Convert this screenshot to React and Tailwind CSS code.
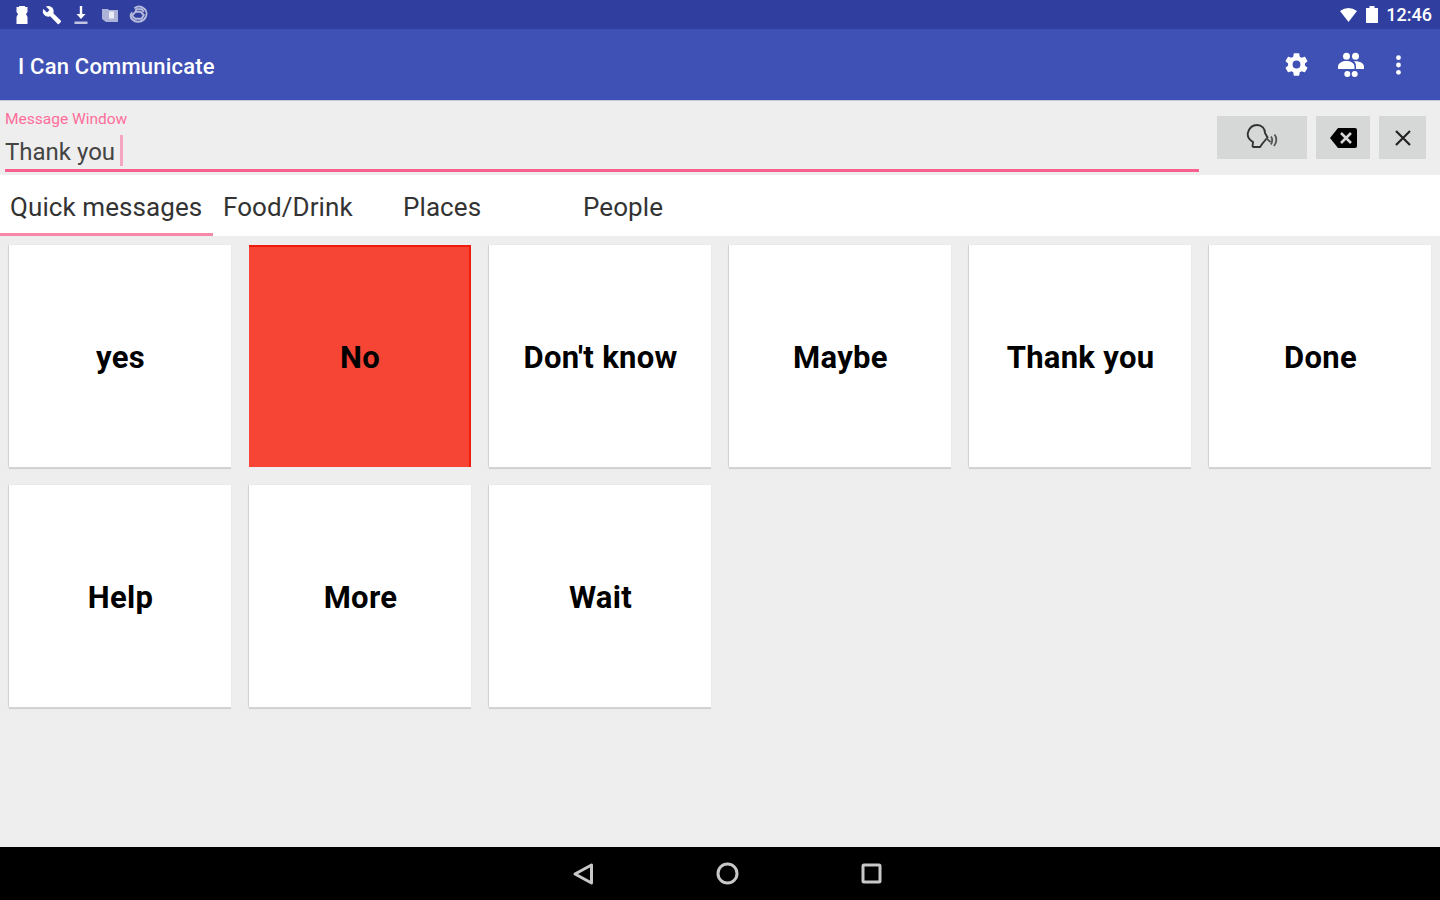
const messages = [
  { text: "yes" },
  { text: "No", danger: true },
  { text: "Don't know" },
  { text: "Maybe" },
  { text: "Thank you" },
  { text: "Done" },
  { text: "Help" },
  { text: "More" },
  { text: "Wait" },
];

const StatusBar = () => (
  <div className="flex h-[29px] items-center justify-between bg-[#303f9f] pr-2 pl-[13px] text-white">
    <div className="flex items-center gap-[10.500px]">
      <svg className="h-[18px] w-[18px]" viewBox="0 0 18 18" fill="currentColor">
        <path d="M6 0h6v1h2.500v5L13 8l1.500 3v7h-11v-7L5 8 3.500 6V1H6z" />
      </svg>
      <svg className="h-[20px] w-[20px]" viewBox="0 0 24 24" fill="currentColor">
        <path d="M22.700 19l-9.100-9.100c.9-2.300.4-5-1.500-6.900-2-2-5-2.400-7.400-1.300L9 6 6 9 1.600 4.700C.4 7.100.9 10.100 2.900 12.100c1.900 1.900 4.600 2.400 6.900 1.500l9.100 9.100c.4.4 1 .4 1.400 0l2.300-2.300c.5-.4.5-1.100.1-1.400z" />
      </svg>
      <svg className="h-[20px] w-[18px]" viewBox="0 0 18 20" fill="currentColor">
        <path d="M7.800 1h2.400v8h3.300L9 14 4.500 9h3.300z" />
        <path d="M2.500 16.500h13V19h-13z" opacity=".7" />
      </svg>
      <svg className="h-[18px] w-[18px]" viewBox="0 0 18 18" fill="currentColor">
        <path d="M1 3h6l1 1h9v12H5l-4-3z" opacity=".6" />
        <path d="M8 5.500h5v7H8z" opacity=".75" />
      </svg>
      <svg className="h-[19px] w-[19px]" viewBox="0 0 18 18" fill="none" stroke="currentColor" strokeWidth="1.800" opacity=".65">
        <path d="M5 3c3-2 7-2 10 1 2.500 3 2 7-1 10-3 2.500-8 2.500-10.500 0C1 12 1 9 3 7" />
        <path d="M2.500 10.500L6 6.500h5l3 3-2 3.500H6l-3-2.500M6 6.500l1-2.500h5l2 2.500" />
      </svg>
    </div>
    <div className="flex items-center">
      <svg className="h-[14px] w-[17px]" viewBox="0 0 17 14" fill="currentColor">
        <path d="M0 3Q8.500-3 17 3L8.500 14z" />
      </svg>
      <svg className="mr-2 ml-[9px] h-[17px] w-3" viewBox="0 0 12 17" fill="currentColor">
        <path d="M3.500 0h5v2H12v15H0V2h3.500z" />
      </svg>
      <span className="text-[18px] leading-none font-medium">12:46</span>
    </div>
  </div>
);

const AppBar = () => (
  <div className="flex h-[71px] items-center justify-between bg-[#3f51b5] pr-[38px] pl-[18px] text-white">
    <h1 className="pt-[3px] text-[22px] font-medium tracking-[0.2px]">I Can Communicate</h1>
    <div className="flex items-center">
      <svg className="h-[27px] w-[27px]" viewBox="0 0 24 24" fill="currentColor">
        <path d="M19.430 12.980c.04-.32.070-.64.070-.98s-.03-.66-.07-.98l2.110-1.650c.19-.15.240-.42.120-.64l-2-3.460c-.12-.22-.39-.3-.61-.22l-2.490 1c-.52-.4-1.080-.73-1.690-.98l-.38-2.650A.488.488 0 0 0 14 2h-4c-.25 0-.46.180-.49.420l-.38 2.650c-.61.250-1.170.590-1.690.980l-2.490-1c-.23-.09-.49 0-.61.220l-2 3.460c-.13.220-.07.490.120.640l2.110 1.650c-.04.320-.07.650-.07.980s.030.660.070.980l-2.110 1.650c-.19.150-.24.420-.12.640l2 3.460c.12.220.390.300.610.220l2.490-1c.52.400 1.080.730 1.690.980l.38 2.650c.03.240.240.420.490.420h4c.25 0 .46-.18.490-.42l.38-2.650c.61-.25 1.170-.59 1.690-.98l2.490 1c.23.090.490 0 .61-.22l2-3.460c.12-.22.070-.49-.12-.64l-2.110-1.650zM12 15.500A3.500 3.500 0 1 1 12 8.500a3.500 3.500 0 0 1 0 7z" />
      </svg>
      <svg className="ml-[28px] h-[26px] w-[26px]" viewBox="0 0 26 26" fill="currentColor">
        <circle cx="8.500" cy="4.300" r="3.500" />
        <circle cx="17.500" cy="4.300" r="3.500" />
        <path d="M0 17v-2.500C0 11 4.500 9 8.500 9s8 2 8 5.500V17z" />
        <path d="M18 17v-3c0-2-.8-3.600-2-4.700C21 8.700 26 11 26 14.500V17z" />
        <circle cx="9.300" cy="22" r="3" />
        <circle cx="16.700" cy="22" r="3" />
      </svg>
      <svg className="ml-[31px] h-5 w-[7px]" viewBox="0 0 7 20" fill="currentColor">
        <circle cx="3.500" cy="2.700" r="2.400" />
        <circle cx="3.500" cy="10" r="2.400" />
        <circle cx="3.500" cy="17.300" r="2.400" />
      </svg>
    </div>
  </div>
);

const MessageWindow = () => (
  <div className="flex h-[75px] justify-between border-t border-[#c5c8dc] pr-[14px] pl-[5px]">
    <div className="flex h-[71px] w-[1194px] flex-col border-b-[3px] border-[#f8608f]">
      <label className="mt-[8px] text-[15.500px] leading-[20px] text-[#ff6d9b]">Message Window</label>
      <div className="mt-[5px] flex h-[32px] items-center">
        <span className="pt-1 text-[24px] leading-none text-[#444]">Thank you</span>
        <span className="ml-[5px] h-[31px] w-[3px] bg-[#f4a6c0]" />
      </div>
    </div>
    <div className="mt-[15px] flex h-[43px]">
      <button className="flex w-[90px] items-center justify-center bg-[#d6d7d7]">
        <svg className="mb-1 h-[26px] w-[32px]" viewBox="0 0 32 26" fill="none" stroke="#333" strokeWidth="1.900">
          <path d="M6.500 24l.5-5C3 16.500 1 13 2 9.500 3.500 4.500 7 2 11 2c5 0 8 3.500 8 8l2.500 4.500-5 6L14 24H6.500" />
          <path d="M20.500 15.500l4 3.500M25 13.500c1.500 2 1.500 5 0 8M28.500 11.500c2.500 3 2.500 8-.5 11.500" stroke="#555" />
        </svg>
      </button>
      <button className="ml-[9px] flex w-[54px] items-center justify-center bg-[#d6d7d7]">
        <svg className="h-5 w-[27px]" viewBox="0 0 27 20">
          <path d="M8 0h17q2 0 2 2v16q0 2-2 2H8L0 10z" />
          <path d="M11 5l10 10M21 5L11 15" stroke="#d6d7d7" strokeWidth="2.500" />
        </svg>
      </button>
      <button className="ml-[9px] flex w-[47px] items-center justify-center bg-[#d6d7d7]">
        <svg className="h-4 w-4" viewBox="0 0 16 16" stroke="#222" strokeWidth="2.200">
          <path d="M1 1l14 14M15 1L1 15" />
        </svg>
      </button>
    </div>
  </div>
);

const Tabs = () => (
  <nav className="flex h-[61px] bg-white text-[26px] leading-[64px] tracking-[0.08px] text-[#333]">
    <div className="w-[213px] border-b-[3px] border-[#f888a8] pl-[10px]">Quick messages</div>
    <div className="w-[180px] pl-[10px]">Food/Drink</div>
    <div className="w-[180px] pl-[10px]">Places</div>
    <div className="w-[180px] pl-[10px]">People</div>
  </nav>
);

const MessageCard = ({ text, danger }) => (
  <button
    className={
      danger
        ? "m-[9px] h-[222px] w-[222px] border-t-2 border-r-2 border-[#ee1c0c] bg-[#f64435] pt-[3px] pl-0.5 text-[31px] font-bold tracking-[0.3px] text-black"
        : "m-[9px] h-[222px] w-[222px] bg-white pt-[5px] pl-px text-[31px] font-bold tracking-[0.3px] text-black shadow-[0_2px_1px_#d2d2d2,-1px_0_1px_#d2d2d2]"
    }
  >
    {text}
  </button>
);

const NavBar = () => (
  <div className="flex h-[53px] items-center justify-center gap-[122px] bg-black pl-[13px] text-[#c8c8c8]">
    <svg className="h-6 w-[22px]" viewBox="0 0 22 24" fill="none" stroke="currentColor" strokeWidth="3">
      <path d="M19.500 3v18L3 12z" strokeLinejoin="round" />
    </svg>
    <svg className="h-[23px] w-[23px]" viewBox="0 0 23 23" fill="none" stroke="currentColor" strokeWidth="3">
      <circle cx="11.500" cy="11.500" r="9.500" />
    </svg>
    <svg className="h-[21px] w-[21px]" viewBox="0 0 21 21" fill="none" stroke="currentColor" strokeWidth="3">
      <rect x="2" y="2" width="17" height="17" rx="1" />
    </svg>
  </div>
);

export default function App() {
  return (
    <div className="flex h-[900px] w-[1440px] flex-col overflow-hidden bg-[#eeeeee] font-['Roboto',sans-serif]">
      <StatusBar />
      <AppBar />
      <MessageWindow />
      <Tabs />
      <div className="grid flex-1 grid-cols-6 content-start">
        {messages.map((m) => (
          <MessageCard key={m.text} {...m} />
        ))}
      </div>
      <NavBar />
    </div>
  );
}
